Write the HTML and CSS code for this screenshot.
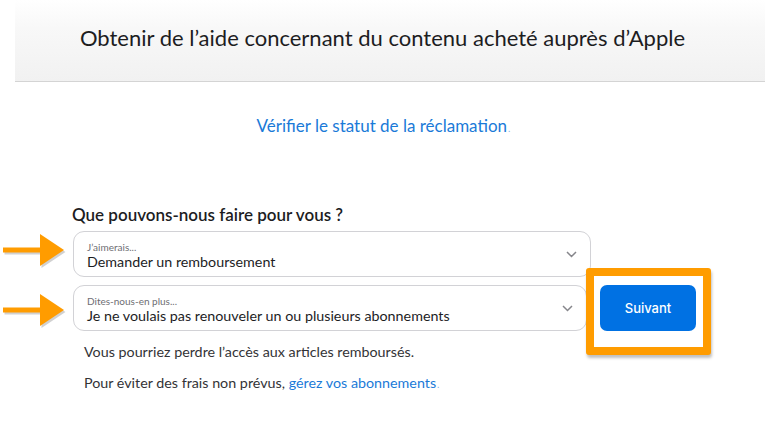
FILE: index.html
```html
<!DOCTYPE html>
<html lang="fr">
<head>
<meta charset="utf-8">
<title>Obtenir de l'aide</title>
<link rel="stylesheet" href="styles.css">
</head>
<body>
<header class="top">
  <h1 class="title">Obtenir de l’aide concernant du contenu acheté auprès d’Apple</h1>
</header>
<div class="status"><a class="link" href="#">Vérifier le statut de la réclamation</a><span class="dot">.</span></div>
<main class="form">
  <h2 class="question">Que pouvons-nous faire pour vous ?</h2>
  <div class="row">
    <svg class="arrow arrow-a" width="66" height="36" viewBox="0 0 66 36"><g class="arrow-shadow" transform="translate(1.5,2)"><rect x="3" y="15.5" width="40" height="5"/><polygon points="40,2 64,18 40,34"/></g><g class="arrow-fill"><rect x="3" y="15.5" width="40" height="5"/><polygon points="40,2 64,18 40,34"/></g></svg>
    <div class="select wide">
      <span class="label">J’aimerais...</span>
      <span class="value">Demander un remboursement</span>
      <svg class="chev" width="11" height="7" viewBox="0 0 11 7"><path d="M1 1l4.5 4.5L10 1"/></svg>
    </div>
  </div>
  <div class="row">
    <svg class="arrow arrow-b" width="66" height="36" viewBox="0 0 66 36"><g class="arrow-shadow" transform="translate(1.5,2)"><rect x="3" y="15.5" width="40" height="5"/><polygon points="40,2 64,18 40,34"/></g><g class="arrow-fill"><rect x="3" y="15.5" width="40" height="5"/><polygon points="40,2 64,18 40,34"/></g></svg>
    <div class="select narrow">
      <span class="label">Dites-nous-en plus...</span>
      <span class="value">Je ne voulais pas renouveler un ou plusieurs abonnements</span>
      <svg class="chev" width="11" height="7" viewBox="0 0 11 7"><path d="M1 1l4.5 4.5L10 1"/></svg>
    </div>
    <div class="btn-wrap"><button class="btn">Suivant</button></div>
  </div>
  <p class="note first">Vous pourriez perdre l’accès aux articles remboursés.</p>
  <p class="note">Pour éviter des frais non prévus, <a class="link" href="#">gérez vos abonnements</a><span class="dot">.</span></p>
</main>
</body>
</html>
```

FILE: styles.css
```css
*, *::before, *::after { box-sizing: border-box; }
html, body { margin: 0; padding: 0; background: #fff; }
body {
  font-family: "Lato", "Open Sans", "Liberation Sans", sans-serif;
  color: #1d1d1f;
  width: 765px;
  height: 433px;
  overflow: hidden;
}
.top {
  margin-left: 15px;
  height: 82px;
  padding-right: 15px;
  background: linear-gradient(#ffffff 0%, #f8f8f8 35%, #f1f1f1 100%);
  border-bottom: 1px solid #d4d4d4;
  display: flex;
  align-items: center;
  justify-content: center;
}
.title {
  margin: 0 0 6px 0;
  font-size: 22px;
  font-weight: 400;
  color: #1d1d1f;
}
.status {
  text-align: center;
  margin-top: 34px;
  font-size: 17px;
  line-height: 20px;
  padding-left: 2px;
}
.link { color: #1a7ad8; text-decoration: none; }
.dot { color: #8ab6e6; font-size: 10px; margin-left: 1px; }
.form {
  margin-top: 67px;
  padding-left: 73px;
}
.question {
  margin: 0 0 6px -1px;
  font-size: 17px;
  font-weight: 600;
  line-height: 20px;
  color: #1d1d1f;
}
.row {
  position: relative;
  display: flex;
  align-items: center;
  margin-bottom: 8px;
}
.arrow {
  position: absolute;
  left: -73px;
  top: 50%;
}
.arrow-a { margin-top: -22px; }
.arrow-b { margin-top: -16px; }
.arrow-fill { fill: #ff9c00; }
.arrow-shadow { fill: rgba(0,0,0,0.18); }
.select {
  position: relative;
  height: 46px;
  border: 1px solid #d2d2d6;
  border-radius: 11px;
  padding: 10px 40px 0 13px;
  display: flex;
  flex-direction: column;
  background: #fff;
}
.wide { width: 518px; }
.narrow { width: 514px; }
.label {
  font-size: 10px;
  line-height: 11px;
  height: 11px;
  color: #6e6e73;
}
.value {
  font-size: 14.3px;
  line-height: 17px;
  color: #1d1d1f;
  white-space: nowrap;
}
.chev {
  position: absolute;
  right: 13px;
  top: 19px;
  fill: none;
  stroke: #86868b;
  stroke-width: 1.5;
}
.btn-wrap {
  position: relative;
  margin-left: 13px;
  margin-top: -1px;
}
.btn-wrap::before {
  content: "";
  position: absolute;
  left: -14px;
  top: -17px;
  width: 125px;
  height: 87px;
  border: 8px solid #ff9c00;
  border-radius: 3px;
  box-shadow: 1px 3px 3px rgba(0,0,0,0.25);
  background: #fff;
}
.btn {
  position: relative;
  width: 96px;
  height: 46px;
  border: 0;
  border-radius: 7px;
  background: #0071e3;
  color: #fff;
  font-family: "Inter", "Lato", sans-serif;
  font-size: 13px;
  font-weight: 500;
}
.note {
  margin: 0 0 12px 11px;
  font-size: 14.3px;
  line-height: 19px;
  color: #333336;
}
.note.first { margin-top: 11px; }
```
